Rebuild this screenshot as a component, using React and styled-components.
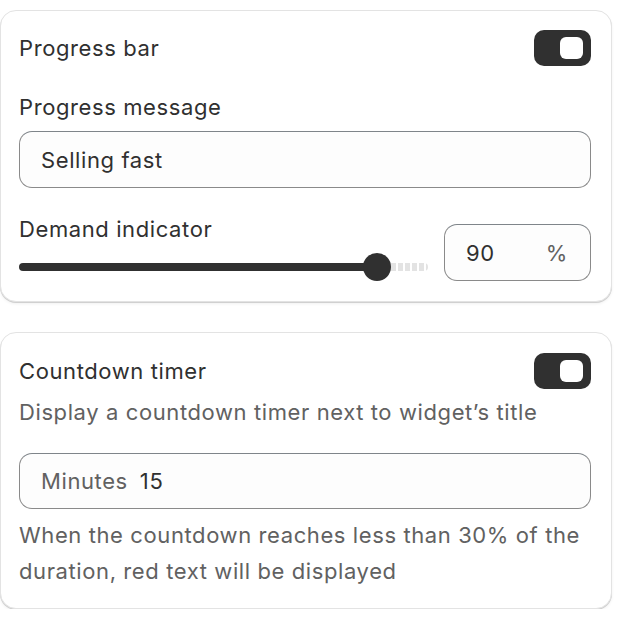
import React from "react";
import styled, { createGlobalStyle } from "styled-components";

const Global = createGlobalStyle`
  html, body { margin: 0; padding: 0; background: #ffffff; }
  body { font-family: Inter, "Noto Sans", sans-serif; color: #303030; -webkit-font-smoothing: antialiased; }
`;

const Page = styled.div`
  width: 612px;
  padding-top: 10px;
  display: flex;
  flex-direction: column;
  gap: 30px;
`;

const Card = styled.section`
  box-sizing: border-box;
  background: #ffffff;
  border: 1px solid #e3e3e3;
  border-radius: 16px;
  box-shadow: 0 1px 0 #d0d0d0, 0 2px 3px rgba(0, 0, 0, 0.06);
  padding: ${(p) => p.$pad};
  display: flex;
  flex-direction: column;
`;

const HeaderRow = styled.div`
  display: flex;
  align-items: center;
  justify-content: space-between;
  height: 36px;
`;

const textBase = `
  font-size: 22px;
  letter-spacing: 0.6px;
  font-weight: 400;
`;

const Title = styled.h2`
  margin: 0;
  ${textBase}
  line-height: 30px;
  color: #303030;
`;

const Toggle = styled.div`
  box-sizing: border-box;
  width: 57px;
  height: 36px;
  border-radius: 10px;
  background: #303030;
  display: flex;
  align-items: center;
  justify-content: flex-end;
  padding-right: 8px;
`;

const Knob = styled.span`
  width: 23px;
  height: 22px;
  border-radius: 6px;
  background: #ffffff;
`;

const Field = styled.div`
  display: flex;
  flex-direction: column;
  gap: 9px;
  margin-top: ${(p) => p.$mt || 0}px;
`;

const Label = styled.label`
  ${textBase}
  line-height: 30px;
  color: #303030;
`;

const Input = styled.div`
  box-sizing: border-box;
  height: ${(p) => p.$h || 57}px;
  width: ${(p) => (p.$w ? `${p.$w}px` : "auto")};
  flex: none;
  border: 1px solid #8a8a8a;
  border-top-color: #7f858a;
  border-radius: 13px;
  background: #fdfdfd;
  display: flex;
  align-items: center;
  padding: 0 22px 0 21px;
  ${textBase}
  color: #303030;
  gap: 12px;
`;

const Prefix = styled.span`
  color: #616161;
`;

const Value = styled.span`
  flex: 1;
`;

const Suffix = styled.span`
  color: #616161;
`;

const SliderRow = styled.div`
  display: flex;
  align-items: flex-end;
  gap: 16px;
  margin-top: 26px;
`;

const SliderCol = styled.div`
  flex: 1;
  display: flex;
  flex-direction: column;
  gap: 9px;
`;

const Track = styled.div`
  height: 28px;
  display: flex;
  align-items: center;
`;

const Filled = styled.div`
  flex: 1;
  height: 8px;
  border-radius: 4px 0 0 4px;
  background: #303030;
`;

const Thumb = styled.div`
  width: 28px;
  height: 28px;
  border-radius: 50%;
  background: #303030;
  margin-left: -14px;
  flex: none;
`;

const Rest = styled.div`
  width: 37px;
  height: 8px;
  flex: none;
  border-radius: 0 4px 4px 0;
  background: repeating-linear-gradient(
    90deg,
    #e3e3e3 0 5px,
    #ffffff 5px 7px
  );
`;

const Desc = styled.p`
  margin: ${(p) => p.$m || "0"};
  ${textBase}
  line-height: 36px;
  color: #616161;
`;

export default function App() {
  return (
    <>
      <Global />
      <Page>
        <Card $pad="19px 20px 20px 18px">
          <HeaderRow>
            <Title>Progress bar</Title>
            <Toggle>
              <Knob />
            </Toggle>
          </HeaderRow>
          <Field $mt={26}>
            <Label>Progress message</Label>
            <Input>
              <Value>Selling fast</Value>
            </Input>
          </Field>
          <SliderRow>
            <SliderCol>
              <Label>Demand indicator</Label>
              <Track>
                <Filled />
                <Thumb />
                <Rest />
              </Track>
            </SliderCol>
            <Input $w={147}>
              <Value>90</Value>
              <Suffix>%</Suffix>
            </Input>
          </SliderRow>
        </Card>
        <Card $pad="20px 20px 19px 18px">
          <HeaderRow>
            <Title>Countdown timer</Title>
            <Toggle>
              <Knob />
            </Toggle>
          </HeaderRow>
          <Desc $m="5px 0 23px">Display a countdown timer next to widget’s title</Desc>
          <Input $h={56}>
            <Prefix>Minutes</Prefix>
            <Value>15</Value>
          </Input>
          <Desc $m="8px 0 0">
            When the countdown reaches less than 30% of the duration, red text will be displayed
          </Desc>
        </Card>
      </Page>
    </>
  );
}
